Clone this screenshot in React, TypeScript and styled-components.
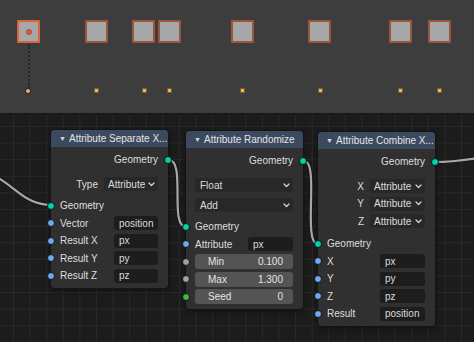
import React from "react";
import styled, { createGlobalStyle } from "styled-components";

const GlobalStyle = createGlobalStyle`
  html, body { margin: 0; padding: 0; background: #1d1d1d; }
  * { box-sizing: border-box; }
`;

const Screen = styled.div`
  width: 474px;
  height: 342px;
  display: flex;
  flex-direction: column;
  overflow: hidden;
  font-family: "Liberation Sans", Arial, sans-serif;
  font-size: 10px;
  color: #dedede;
`;

const Timeline = styled.div`
  position: relative;
  height: 113px;
  flex: none;
  background: #3d3d3d;
`;

const Divider = styled.div`
  height: 2px;
  flex: none;
  background: #191919;
`;

const Keyframe = styled.div<{ $active?: boolean }>`
  position: absolute;
  top: 20px;
  width: 23px;
  height: 23px;
  background: #a5a7a9;
  border: ${(p) => (p.$active ? "2px solid #dd6438" : "2px solid #9c553b")};
  border-radius: 1px;
  display: flex;
  align-items: center;
  justify-content: center;
`;

const KeyDot = styled.div`
  width: 6px;
  height: 6px;
  border-radius: 50%;
  background: #d2603e;
  border: 1px solid #a94a30;
`;

const Marker = styled.div<{ $round?: boolean }>`
  position: absolute;
  top: 88px;
  width: ${(p) => (p.$round ? 6 : 5)}px;
  height: ${(p) => (p.$round ? 6 : 5)}px;
  background: #e8b566;
  border: 1px solid ${(p) => (p.$round ? "#1e1e1e" : "#7a5a2a")};
  border-radius: ${(p) => (p.$round ? "50%" : "0")};
`;

const DottedLine = styled.div`
  position: absolute;
  left: 28px;
  top: 44px;
  height: 44px;
  width: 0;
  border-left: 2px dotted #262626;
`;

const Editor = styled.div`
  position: relative;
  flex: 1;
  background-color: #1c1c1c;
  background-image: linear-gradient(to right, #292929 1px, transparent 1px),
    linear-gradient(to bottom, #292929 1px, transparent 1px);
  background-size: 16.6px 16.6px;
  background-position: 13px 11px;
  overflow: hidden;
`;

const Wires = styled.svg`
  position: absolute;
  left: 0;
  top: 0;
  width: 474px;
  height: 227px;
  overflow: visible;
`;

const Node = styled.div`
  position: absolute;
  width: 117px;
  background: #303030;
  border-radius: 4px;
  box-shadow: 0 0 0 1px #141414, 0 2px 6px rgba(0, 0, 0, 0.5);
  padding-bottom: 3px;
`;

const Header = styled.div`
  height: 17px;
  background: #3c4a5f;
  border-radius: 4px 4px 0 0;
  display: flex;
  align-items: center;
  padding-left: 8px;
  gap: 4px;
  color: #e4e4e4;
  white-space: nowrap;
  overflow: hidden;
`;

const Tri = styled.span`
  font-size: 7px;
  color: #d8d8d8;
  width: 6px;
`;

const Body = styled.div`
  padding-top: 4px;
  display: flex;
  flex-direction: column;
`;

const Section = styled.div<{ $gap: number }>`
  margin-top: ${(p) => p.$gap}px;
  display: flex;
  flex-direction: column;
`;

const Row = styled.div<{ $h?: number; $align?: string }>`
  position: relative;
  height: ${(p) => p.$h ?? 17.5}px;
  display: flex;
  align-items: center;
  justify-content: ${(p) => p.$align ?? "flex-start"};
  padding: 0 10px 0 9px;
  gap: 6px;
`;

const Label = styled.span<{ $grow?: boolean; $right?: boolean }>`
  flex: ${(p) => (p.$grow ? 1 : "none")};
  text-align: ${(p) => (p.$right ? "right" : "left")};
  white-space: nowrap;
`;

const Socket = styled.span<{ $color: string; $side: "left" | "right" }>`
  position: absolute;
  top: 50%;
  ${(p) => p.$side}: -4px;
  width: 8px;
  height: 8px;
  margin-top: -4px;
  border-radius: 50%;
  background: ${(p) => p.$color};
  border: 1px solid #111;
`;

const Dropdown = styled.div<{ $w?: number }>`
  height: 14px;
  width: ${(p) => (p.$w ? `${p.$w}px` : "auto")};
  flex: ${(p) => (p.$w ? "none" : 1)};
  background: #282828;
  border-radius: 3px;
  display: flex;
  align-items: center;
  justify-content: space-between;
  padding: 0 3px 0 ${(p) => (p.$w ? 4 : 5)}px;
  color: #dcdcdc;
  white-space: nowrap;
`;

const TextField = styled.div<{ $w: number }>`
  height: 14px;
  width: ${(p) => p.$w}px;
  margin-left: auto;
  background: #1d1d1d;
  border-radius: 3px;
  display: flex;
  align-items: center;
  padding-left: 5px;
  color: #dcdcdc;
`;

const NumField = styled.div`
  flex: 1;
  height: 15px;
  background: #545454;
  border-radius: 3px;
  display: flex;
  align-items: center;
  justify-content: space-between;
  padding: 0 10px 0 13px;
  color: #e4e4e4;
`;

const Chevron = () => (
  <svg width="7" height="5" viewBox="0 0 7 5">
    <path d="M1 1 L3.5 3.5 L6 1" fill="none" stroke="#d8d8d8" strokeWidth="1.2" strokeLinecap="round" strokeLinejoin="round" />
  </svg>
);

const GEO = "#00d6a3";
const BLUE = "#6fa9ee";
const GRAY = "#a1a1a1";
const INT = "#45b745";

const keyframes = [17, 85, 132, 158, 231, 308, 389, 428];
const markers = [96, 144, 169, 242, 320, 400, 439];

const wires = [
  "M -40 53 C 10 53, 15 90, 51 90",
  "M 169 45 C 186 45, 169 112, 186 112",
  "M 304 46 C 320 46, 302 129, 318 129",
  "M 435 47 C 470 47, 490 38, 530 38",
];

export default function App() {
  return (
    <>
      <GlobalStyle />
      <Screen>
        <Timeline>
          {keyframes.map((x, i) => (
            <Keyframe key={x} $active={i === 0} style={{ left: x }}>
              {i === 0 && <KeyDot />}
            </Keyframe>
          ))}
          <DottedLine />
          <Marker $round style={{ left: 25 }} />
          {markers.map((x) => (
            <Marker key={x} style={{ left: x - 2 }} />
          ))}
        </Timeline>
        <Divider />
        <Editor>
          <Wires viewBox="0 0 474 227">
            {wires.map((d) => (
              <g key={d}>
                <path d={d} fill="none" stroke="#151515" strokeWidth="4" />
                <path d={d} fill="none" stroke="#a8a8a8" strokeWidth="2.2" />
              </g>
            ))}
          </Wires>

          <Node style={{ left: 51, top: 15 }}>
            <Header>
              <Tri>▼</Tri>
              <span>Attribute Separate X...</span>
            </Header>
            <Body>
              <Row $align="flex-end">
                <Label>Geometry</Label>
                <Socket $color={GEO} $side="right" />
              </Row>
              <Section $gap={7}>
                <Row>
                  <Label $grow $right>Type</Label>
                  <Dropdown $w={54}>
                    <span>Attribute</span>
                    <Chevron />
                  </Dropdown>
                </Row>
              </Section>
              <Section $gap={4}>
                <Row>
                  <Socket $color={GEO} $side="left" />
                  <Label>Geometry</Label>
                </Row>
                {[
                  ["Vector", "position"],
                  ["Result X", "px"],
                  ["Result Y", "py"],
                  ["Result Z", "pz"],
                ].map(([l, v]) => (
                  <Row key={l}>
                    <Socket $color={BLUE} $side="left" />
                    <Label>{l}</Label>
                    <TextField $w={44}>{v}</TextField>
                  </Row>
                ))}
              </Section>
            </Body>
          </Node>

          <Node style={{ left: 186, top: 16 }}>
            <Header>
              <Tri>▼</Tri>
              <span>Attribute Randomize</span>
            </Header>
            <Body>
              <Row $align="flex-end">
                <Label>Geometry</Label>
                <Socket $color={GEO} $side="right" />
              </Row>
              <Section $gap={5.5}>
                {["Float", "Add"].map((t) => (
                  <Row key={t} $h={20}>
                    <Dropdown>
                      <span>{t}</span>
                      <Chevron />
                    </Dropdown>
                  </Row>
                ))}
              </Section>
              <Section $gap={3}>
                <Row>
                  <Socket $color={GEO} $side="left" />
                  <Label>Geometry</Label>
                </Row>
                <Row>
                  <Socket $color={BLUE} $side="left" />
                  <Label>Attribute</Label>
                  <TextField $w={45}>px</TextField>
                </Row>
                {[
                  ["Min", "0.100", GRAY],
                  ["Max", "1.300", GRAY],
                  ["Seed", "0", INT],
                ].map(([l, v, c]) => (
                  <Row key={l}>
                    <Socket $color={c} $side="left" />
                    <NumField>
                      <span>{l}</span>
                      <span>{v}</span>
                    </NumField>
                  </Row>
                ))}
              </Section>
            </Body>
          </Node>

          <Node style={{ left: 318, top: 17 }}>
            <Header>
              <Tri>▼</Tri>
              <span>Attribute Combine X...</span>
            </Header>
            <Body>
              <Row $align="flex-end">
                <Label>Geometry</Label>
                <Socket $color={GEO} $side="right" />
              </Row>
              <Section $gap={7}>
                {["X", "Y", "Z"].map((a) => (
                  <Row key={a}>
                    <Label $grow $right>{a}</Label>
                    <Dropdown $w={55}>
                      <span>Attribute</span>
                      <Chevron />
                    </Dropdown>
                  </Row>
                ))}
              </Section>
              <Section $gap={5}>
                <Row>
                  <Socket $color={GEO} $side="left" />
                  <Label>Geometry</Label>
                </Row>
                {[
                  ["X", "px"],
                  ["Y", "py"],
                  ["Z", "pz"],
                  ["Result", "position"],
                ].map(([l, v]) => (
                  <Row key={l}>
                    <Socket $color={BLUE} $side="left" />
                    <Label>{l}</Label>
                    <TextField $w={45}>{v}</TextField>
                  </Row>
                ))}
              </Section>
            </Body>
          </Node>
        </Editor>
      </Screen>
    </>
  );
}
